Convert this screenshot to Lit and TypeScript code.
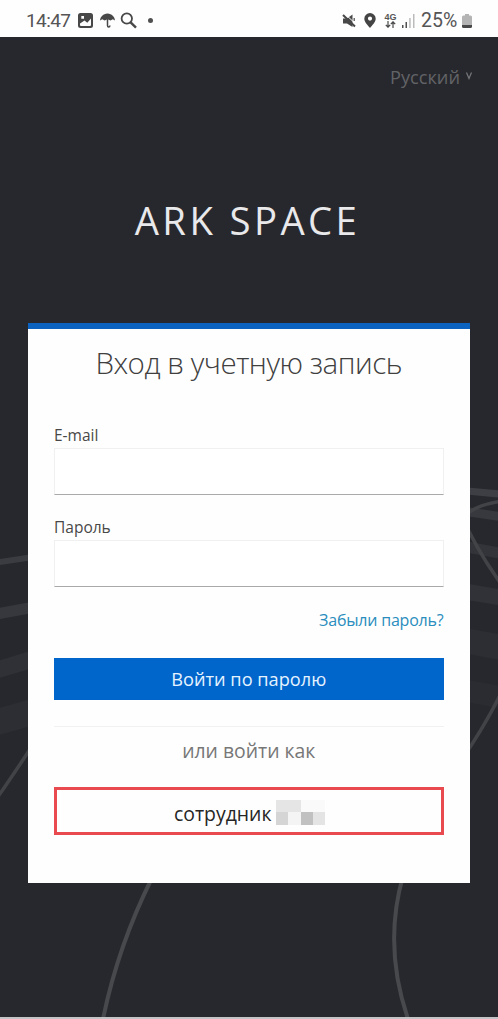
import { LitElement, html, css, svg } from "lit";
import { customElement, property } from "lit/decorators.js";

@customElement("status-bar")
class StatusBar extends LitElement {
  static styles = css`
    :host { display: flex; justify-content: space-between; align-items: center; height: 37px; box-sizing: border-box; padding: 4px 26px 0 26px; background: #fefefe; color: #555; font-family: Roboto, sans-serif; }
    .group { display: flex; align-items: center; }
    .time { font-size: 19px; line-height: 22px; width: 45px; margin-right: 7px; white-space: nowrap; letter-spacing: -0.6px; }
    .pct { font-size: 19.500px; line-height: 22px; width: 38px; white-space: nowrap; letter-spacing: 0; margin: 0 3px 0 6px; }
    .net { display: flex; flex-direction: column; align-items: center; width: 13px; margin: 0 5px 0 8px; font: 700 9px/8px "Liberation Sans", sans-serif; }
    svg { display: block; }
    .umbrella { margin-left: 7px; }
    .search { margin-left: 5px; }
    .dot { width: 5px; height: 5px; border-radius: 50%; background: #505050; margin-left: 10px; }
    .pin { margin-left: 8px; }
  `;
  render() {
    return html`
      <div class="group">
        <span class="time">14:47</span>
        <svg width="15" height="15" viewBox="0 0 15 15"><path fill="#484848" fill-rule="evenodd" d="M2.5 0h10A2.500 2.500 0 0 1 15 2.500v10a2.500 2.500 0 0 1-2.500 2.500h-10A2.500 2.500 0 0 1 0 12.500v-10A2.500 2.500 0 0 1 2.500 0zM2 10.500v1.500q0 1 1 1h9q1 0 1-1V5.500L9.300 9.700 6.500 7.500zM3.300 3v2.700h2.700V3z"/></svg>
        <svg class="umbrella" width="15" height="15" viewBox="0 0 15 15"><path fill="#484848" d="M0 7.500C.3 3.400 3.200.800 7.500.400c4.300.400 7.200 3 7.500 7.100L12.800 6.300 10.500 7.500 7.500 6.300 4.600 7.500 2.300 6.300z"/><path d="M7.500 6v6.500q0 1.500 1.200 1.500t1.200-1.500" fill="none" stroke="#484848" stroke-width="1.500"/></svg>
        <svg class="search" width="18" height="17" viewBox="0 0 18 17"><circle cx="6.800" cy="6.500" r="5.200" fill="none" stroke="#484848" stroke-width="1.800"/><path d="M10.600 10.300l5.400 5.400" stroke="#484848" stroke-width="2.400"/></svg>
        <span class="dot"></span>
      </div>
      <div class="group">
        <svg width="14" height="14" viewBox="0 0 14 14"><path fill="#484848" d="M1 4.500h4L10.500.500V13L5 9.500H1z"/><path d="M4 .800L14 10.300" stroke="#fefefe" stroke-width="1"/><path d="M1 1L13 12.500" stroke="#484848" stroke-width="2"/><path d="M12.200 4v3" stroke="#484848" stroke-width="1.200"/></svg>
        <svg class="pin" width="12" height="15" viewBox="0 0 12 15"><path fill="#444" fill-rule="evenodd" d="M6 0a5.700 5.700 0 0 1 5.700 5.700C11.700 9.300 8 12.300 6 15 4 12.300.300 9.300.300 5.700A5.700 5.700 0 0 1 6 0zM6 3.500a2.100 2.100 0 1 0 0 4.200 2.100 2.100 0 0 0 0-4.200z"/></svg>
        <span class="net"><span>4G</span><svg width="11" height="7" viewBox="0 0 11 7"><path d="M3 0v6M.800 3.800L3 6.200l2.200-2.400M8 7V1M5.800 3.200L8 .800l2.200 2.400" fill="none" stroke="#484848" stroke-width="1.200"/></svg></span>
        <svg width="13" height="14" viewBox="0 0 13 14"><path fill="#505050" d="M0 11h1.500v3H0zM3.500 8H5v6H3.500z"/><path fill="#bbb" d="M7.200 4h1.500v10H7.200zM11 0h1.500v14H11z"/></svg>
        <span class="pct">25%</span>
        <svg width="10" height="14" viewBox="0 0 10 14"><path fill="#b4b4b4" d="M3 0h4v1.500h1.500Q10 1.500 10 3v8H0V3q0-1.500 1.500-1.500H3z"/><path fill="#484848" d="M0 11h10V12.500Q10 14 8.500 14h-7Q0 14 0 12.500z"/></svg>
      </div>`;
  }
}

@customElement("form-field")
class FormField extends LitElement {
  @property() label = "";
  @property() type = "text";
  static styles = css`
    :host { display: block; height: 70px; }
    label { display: block; font-size: 15.5px; line-height: 20px; color: #484848; }
    input { display: block; width: 100%; height: 47px; margin: 3px 0 0; padding: 0 12px; box-sizing: border-box; border: 1px solid #f0f0f0; border-bottom: 1.500px solid #aaaaaa; background: #fff; outline: none; font: inherit; }
  `;
  render() {
    return html`<label for="f">${this.label}</label><input id="f" type=${this.type} />`;
  }
}

const ARCS: [string, string, number][] = [
  ["M-20 565L40 556", "#3b3c41", 6],
  ["M-20 617L40 606", "#37383d", 11],
  ["M-20 675L40 657", "#303136", 17],
  ["M-20 727L40 710", "#2d2e33", 26],
  ["M-10 808Q10 780 40 734", "#424347", 3.5],
  ["M456 490L510 495", "#3e3f44", 7],
  ["M456 510L510 518", "#38393e", 9],
  ["M456 545L510 555", "#333439", 11],
  ["M456 590L510 599", "#313237", 16],
  ["M456 639L510 649", "#2d2e33", 25],
  ["M456 689L510 699", "#2b2c31", 22],
  ["M462 518Q476 504 504 501", "#424347", 3.5],
  ["M460 512Q476 550 504 588", "#424347", 3.5],
  ["M504 687Q486 725 460 762", "#424347", 3.5],
  ["M152 878Q118 946 103 1019", "#48494d", 4],
  ["M403 876Q383 946 408 1019", "#48494d", 4],
];

@customElement("app-root")
class AppRoot extends LitElement {
  static styles = css`
    :host { display: flex; flex-direction: column; width: 498px; height: 1019px; overflow: hidden; font-family: "Open Sans", "Noto Sans", sans-serif; background: #27282d; }
    .page { position: relative; flex: 1; box-sizing: border-box; border-bottom: 2px solid #c4c4c6; padding: 0 28px; }
    .backdrop { position: absolute; left: 0; top: -37px; z-index: 0; }
    .content { position: relative; z-index: 1; }
    .lang { display: flex; justify-content: flex-end; align-items: center; gap: 5px; padding-top: 27px; height: 26px; margin-right: -3px; color: #626367; font-size: 18.200px; line-height: 26px; }
    .lang svg { margin-bottom: 3px; }
    .brand { margin: 99px 0 0; height: 91px; line-height: 54px; padding: 4px 3px 0 0; box-sizing: border-box; font-weight: 400; font-size: 38.300px; letter-spacing: 3.4px; text-align: center; color: #e9e9eb; white-space: nowrap; }
    .card { box-sizing: border-box; width: 441.500px; height: 560px; margin-top: 43px; background: #fefefe; border-top: 6px solid #0b62bf; padding: 14px 26px 0; display: flex; flex-direction: column; }
    h1 { margin: 0 0 42px; text-align: center; font-weight: 300; font-size: 29.500px; letter-spacing: -0.47px; line-height: 40px; color: #404040; white-space: nowrap; }
    .second { margin-top: 22px; }
    .forgot { align-self: flex-end; margin-top: 23px; font-size: 16px; letter-spacing: -0.2px; line-height: 20px; color: #2a8dbd; text-decoration: none; white-space: nowrap; }
    .submit { margin: 28px 0 0; border: 0; padding: 0; height: 42px; flex: none; background: #0066cc; color: #e6f3ff; font: 400 18.200px/42px "Open Sans", "Noto Sans", sans-serif; }
    .rule { height: 1px; background: #f1f1f1; margin-top: 26px; flex: none; }
    .or { margin-top: 11px; text-align: center; font-size: 19.400px; line-height: 26px; color: #777; }
    .employee { display: flex; align-items: center; justify-content: center; gap: 5px; margin-top: 23px; height: 48px; box-sizing: border-box; border: 3px solid #e84a50; padding: 3px 0 0 2px; color: #262626; font-size: 19.400px; line-height: 26px; }
    .who { padding-top: 3px; }
  `;
  render() {
    return html`
      <status-bar></status-bar>
      <main class="page">
        <svg class="backdrop" width="498" height="1017" viewBox="0 0 498 1017">
          ${ARCS.map(([d, c, w]) => svg`<path d=${d} stroke=${c} stroke-width=${w} fill="none"/>`)}
        </svg>
        <div class="content">
          <div class="lang"><span class="name">Русский</span><svg width="8" height="8" viewBox="0 0 8 8"><path d="M1.500.500L4 6.500 6.500.500" fill="none" stroke="#77787c" stroke-width="1.200"/></svg></div>
          <div class="brand">ARK SPACE</div>
          <form class="card">
            <h1>Вход в учетную запись</h1>
            <form-field label="E-mail"></form-field>
            <form-field class="second" label="Пароль" type="password"></form-field>
            <a class="forgot" href="#">Забыли пароль?</a>
            <button class="submit" type="button">Войти по паролю</button>
            <div class="rule"></div>
            <div class="or">или войти как</div>
            <div class="employee"><span class="who">сотрудник</span>
              <svg width="49" height="25" viewBox="0 0 49 25" shape-rendering="crispEdges"><path fill="#e5e5e5" d="M0 0h25v12H0z"/><path fill="#fafafa" d="M25 0h24v12H25z"/><path fill="#d5d5d5" d="M0 12h12v13H0z"/><path fill="#f4f4f4" d="M12 12h13v13H12z"/><path fill="#c1c1c1" d="M25 12h12v13H25z"/><path fill="#e4e4e4" d="M37 12h12v13H37z"/></svg>
            </div>
          </form>
        </div>
      </main>`;
  }
}
